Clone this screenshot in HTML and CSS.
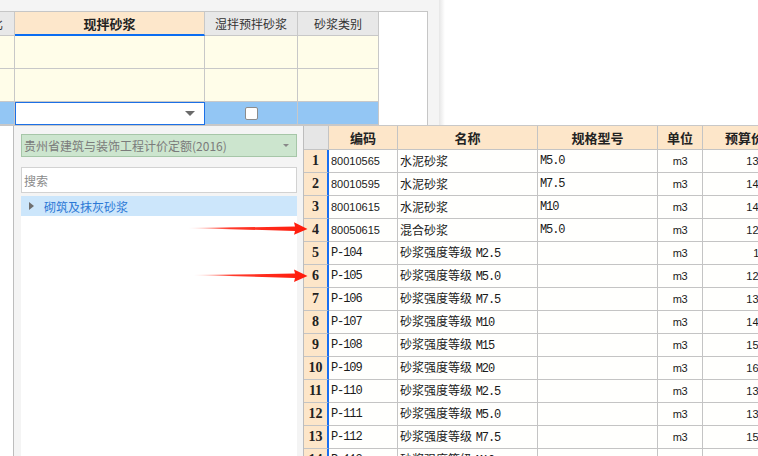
FILE: index.html
```html
<!DOCTYPE html>
<html lang="zh-CN">
<head>
<meta charset="utf-8">
<title>砂浆选择</title>
<link rel="stylesheet" href="styles.css">
</head>
<body>
<div class="screen">
  <div class="top">
    <div class="pane">
      <div class="topbox">
        <div class="tgrid">
          <div class="th cut"><span>比</span></div>
          <div class="th hl">现拌砂浆</div>
          <div class="th">湿拌预拌砂浆</div>
          <div class="th">砂浆类别</div>

          <div class="td"></div><div class="td"></div><div class="td"></div><div class="td"></div>
          <div class="td"></div><div class="td"></div><div class="td"></div><div class="td"></div>

          <div class="td sel"></div>
          <div class="td sel combo"><span class="caret"></span></div>
          <div class="td sel center"><span class="chk"></span></div>
          <div class="td sel"></div>
        </div>
      </div>
    </div>
    <div class="shade"></div>
    <div class="blank"></div>
  </div>

  <div class="popup">
    <div class="side">
      <div class="lib"><span>贵州省建筑与装饰工程计价定额(2016)</span><span class="caret sm"></span></div>
      <div class="search">搜索</div>
      <div class="tree">
        <div class="node"><span class="tri"></span><span>砌筑及抹灰砂浆</span></div>
      </div>
    </div>

    <div class="grid">
      <div class="row head">
        <div class="c rn corner"></div>
        <div class="c code">编码</div>
        <div class="c name">名称</div>
        <div class="c spec">规格型号</div>
        <div class="c unit">单位</div>
        <div class="c price">预算价</div>
      </div>
      <div class="row"><div class="c rn">1</div><div class="c code sans">80010565</div><div class="c name"><span>水泥砂浆</span></div><div class="c spec mono">M5.0</div><div class="c unit">m3</div><div class="c price">138.28</div></div>
      <div class="row"><div class="c rn">2</div><div class="c code sans">80010595</div><div class="c name"><span>水泥砂浆</span></div><div class="c spec mono">M7.5</div><div class="c unit">m3</div><div class="c price">145.46</div></div>
      <div class="row"><div class="c rn">3</div><div class="c code sans">80010615</div><div class="c name"><span>水泥砂浆</span></div><div class="c spec mono">M10</div><div class="c unit">m3</div><div class="c price">147.31</div></div>
      <div class="row"><div class="c rn">4</div><div class="c code sans">80050615</div><div class="c name"><span>混合砂浆</span></div><div class="c spec mono">M5.0</div><div class="c unit">m3</div><div class="c price">126.53</div></div>
      <div class="row"><div class="c rn">5</div><div class="c code mono">P-104</div><div class="c name"><span>砂浆强度等级 <span class="mono">M2.5</span></span></div><div class="c spec"></div><div class="c unit">m3</div><div class="c price">115.6</div></div>
      <div class="row"><div class="c rn">6</div><div class="c code mono">P-105</div><div class="c name"><span>砂浆强度等级 <span class="mono">M5.0</span></span></div><div class="c spec"></div><div class="c unit">m3</div><div class="c price">125.37</div></div>
      <div class="row"><div class="c rn">7</div><div class="c code mono">P-106</div><div class="c name"><span>砂浆强度等级 <span class="mono">M7.5</span></span></div><div class="c spec"></div><div class="c unit">m3</div><div class="c price">136.70</div></div>
      <div class="row"><div class="c rn">8</div><div class="c code mono">P-107</div><div class="c name"><span>砂浆强度等级 <span class="mono">M10</span></span></div><div class="c spec"></div><div class="c unit">m3</div><div class="c price">142.06</div></div>
      <div class="row"><div class="c rn">9</div><div class="c code mono">P-108</div><div class="c name"><span>砂浆强度等级 <span class="mono">M15</span></span></div><div class="c spec"></div><div class="c unit">m3</div><div class="c price">153.86</div></div>
      <div class="row"><div class="c rn">10</div><div class="c code mono">P-109</div><div class="c name"><span>砂浆强度等级 <span class="mono">M20</span></span></div><div class="c spec"></div><div class="c unit">m3</div><div class="c price">162.35</div></div>
      <div class="row"><div class="c rn">11</div><div class="c code mono">P-110</div><div class="c name"><span>砂浆强度等级 <span class="mono">M2.5</span></span></div><div class="c spec"></div><div class="c unit">m3</div><div class="c price">131.23</div></div>
      <div class="row"><div class="c rn">12</div><div class="c code mono">P-111</div><div class="c name"><span>砂浆强度等级 <span class="mono">M5.0</span></span></div><div class="c spec"></div><div class="c unit">m3</div><div class="c price">139.12</div></div>
      <div class="row"><div class="c rn">13</div><div class="c code mono">P-112</div><div class="c name"><span>砂浆强度等级 <span class="mono">M7.5</span></span></div><div class="c spec"></div><div class="c unit">m3</div><div class="c price">151.36</div></div>
      <div class="row"><div class="c rn">14</div><div class="c code mono">P-113</div><div class="c name"><span>砂浆强度等级 <span class="mono">M10</span></span></div><div class="c spec"></div><div class="c unit">m3</div><div class="c price">157.42</div></div>
    </div>
  </div>

  <svg class="arrows" width="758" height="456" viewBox="0 0 758 456" aria-hidden="true">
    <defs>
      <linearGradient id="fade1" x1="188" y1="0" x2="307" y2="0" gradientUnits="userSpaceOnUse">
        <stop offset="0" stop-color="#ff3a2a" stop-opacity="0.15"/>
        <stop offset="0.35" stop-color="#ff2414" stop-opacity="0.9"/>
        <stop offset="1" stop-color="#ff1a0a"/>
      </linearGradient>
      <linearGradient id="fade2" x1="193" y1="0" x2="307" y2="0" gradientUnits="userSpaceOnUse">
        <stop offset="0" stop-color="#ff3a2a" stop-opacity="0.15"/>
        <stop offset="0.35" stop-color="#ff2414" stop-opacity="0.9"/>
        <stop offset="1" stop-color="#ff1a0a"/>
      </linearGradient>
    </defs>
    <path d="M188 228 L295 226.6 L294 222.3 L307.5 229 L294 234.8 L295 231 Z" fill="url(#fade1)"/>
    <path d="M193 275 L295 273.6 L294 269.5 L307.5 276 L294 282 L295 278 Z" fill="url(#fade2)"/>
  </svg>
</div>
</body>
</html>
```

FILE: styles.css
```css
* { box-sizing: border-box; }

html, body {
  margin: 0;
  padding: 0;
  background: #ffffff;
}

.screen {
  position: relative;
  width: 758px;
  height: 456px;
  overflow: hidden;
  font-family: "Noto Sans CJK SC", "Liberation Sans", sans-serif;
  font-size: 12px;
  color: #222;
}

/* ---------- top grid area ---------- */
.top {
  display: flex;
  height: 126px;
}

.pane {
  width: 439px;
  background: #f4f4f4;
  padding-top: 11px;
}

.topbox {
  width: 428px;
  height: 115px;
  background: #ffffff;
  border: 1px solid #c6c6c6;
  border-left: none;
  overflow: hidden;
}

.tgrid {
  display: grid;
  grid-template-columns: 15px 190px 93px 81px;
  grid-template-rows: 24px 33px 33px 23px;
  width: 379px;
}

.th, .td {
  border-right: 1px solid #c8c8c8;
  border-bottom: 1px solid #c8c8c8;
}

.th {
  background: #e8e8e8;
  display: flex;
  align-items: center;
  justify-content: center;
  font-size: 12px;
  color: #333;
  white-space: nowrap;
  overflow: hidden;
}

.th.cut {
  justify-content: flex-start;
}
.th.cut span {
  margin-left: -9px;
}

.th.hl {
  background: #fde7cb;
  font-weight: 700;
  font-size: 13px;
  color: #222;
  border-bottom: 2px solid #0b6df2;
}

.td {
  background: #fffde9;
}

.td.sel {
  background: #93c6f4;
}

.td.center {
  display: flex;
  align-items: center;
  justify-content: center;
}

.td.combo {
  background: #ffffff;
  border: 1px solid #1c70e6;
  display: flex;
  align-items: center;
  justify-content: flex-end;
  padding-right: 9px;
}

.caret {
  width: 0;
  height: 0;
  border-left: 5px solid transparent;
  border-right: 5px solid transparent;
  border-top: 5px solid #6a6a6a;
}

.caret.sm {
  border-left-width: 3px;
  border-right-width: 3px;
  border-top-width: 3px;
  border-top-color: #888;
}

.chk {
  width: 13px;
  height: 13px;
  background: #ffffff;
  border: 1px solid #8c8c8c;
  border-radius: 2px;
}

.shade {
  width: 6px;
  background: linear-gradient(to right, #e6e6e6, #ffffff);
}

.blank {
  flex: 1;
  background: #ffffff;
}

/* ---------- popup ---------- */
.popup {
  position: absolute;
  left: 13px;
  top: 125px;
  right: 0;
  bottom: 0;
  display: flex;
  background: #f4f4f4;
  border-left: 1px solid #bdbdbd;
  border-top: 1px solid #c8c8c8;
}

.side {
  width: 289px;
  flex: none;
  padding: 8px 6px 0 7px;
  display: flex;
  flex-direction: column;
}

.lib {
  height: 23px;
  background: #cce5ce;
  border: 1px solid #a6c6a8;
  display: flex;
  align-items: center;
  justify-content: space-between;
  padding: 0 7px 0 2px;
  color: #7b7b7b;
  font-size: 12px;
  white-space: nowrap;
}

.search {
  margin-top: 10px;
  height: 26px;
  background: #ffffff;
  border: 1px solid #d2d2d2;
  display: flex;
  align-items: center;
  padding-left: 2px;
  color: #8a8a8a;
  font-size: 12px;
}

.tree {
  margin-top: 3px;
  flex: 1;
  background: #ffffff;
}

.node {
  height: 20px;
  background: #cce6fb;
  display: flex;
  align-items: center;
  padding-left: 8px;
  color: #2b78d6;
  font-size: 12px;
}

.tri {
  width: 0;
  height: 0;
  border-top: 4px solid transparent;
  border-bottom: 4px solid transparent;
  border-left: 5px solid #6f6f6f;
  margin-right: 10px;
}

/* ---------- right data grid ---------- */
.grid {
  flex: none;
  width: 480px;
  border-left: 1px solid #bdbdbd;
  display: flex;
  flex-direction: column;
}

.row {
  display: flex;
  height: 23px;
  flex: none;
}

.row.head {
  height: 24px;
}

.c {
  flex: none;
  height: 100%;
  border-right: 1px solid #c4c4c4;
  border-bottom: 1px solid #c4c4c4;
  background: #fffffd;
  display: flex;
  align-items: center;
  padding: 0 2px;
  white-space: nowrap;
  overflow: hidden;
  font-size: 12px;
  line-height: 14px;
  color: #1a1a1a;
}

.rn {
  width: 25px;
  background: #fde6c9;
  justify-content: center;
  padding: 0;
  font-family: "Liberation Serif", serif;
  font-weight: 700;
  font-size: 14px;
  color: #222;
  border-right: 2px solid #1a6ff0;
}

.rn.corner {
  background: #e6e6e6;
  border-right: 1px solid #c4c4c4;
}

.code { width: 69px; }
.name { width: 140px; padding-left: 2px; }
.spec { width: 120px; }
.unit {
  width: 45px;
  justify-content: center;
  font-family: "Liberation Sans", sans-serif;
  font-size: 11px;
  letter-spacing: -0.3px;
}
.price {
  width: 80px;
  justify-content: flex-end;
  padding-right: 2px;
  font-family: "Liberation Sans", sans-serif;
  font-size: 11px;
}

.head .c {
  background: #fde6c9;
  justify-content: center;
  font-weight: 700;
  font-size: 13px;
  color: #222;
  font-family: "Noto Sans CJK SC", sans-serif;
  letter-spacing: 0;
}

.head .c.corner {
  background: #e6e6e6;
}

.head .price {
  justify-content: flex-start;
  padding-left: 22px;
}

.sans {
  font-family: "Liberation Sans", sans-serif;
  font-size: 11px;
}

.mono {
  font-family: "Liberation Mono", monospace;
  font-size: 12px;
  letter-spacing: -1.1px;
}

.name .mono {
  margin-left: 1px;
}

/* ---------- annotation arrows ---------- */
.arrows {
  position: absolute;
  left: 0;
  top: 0;
  pointer-events: none;
}
```
